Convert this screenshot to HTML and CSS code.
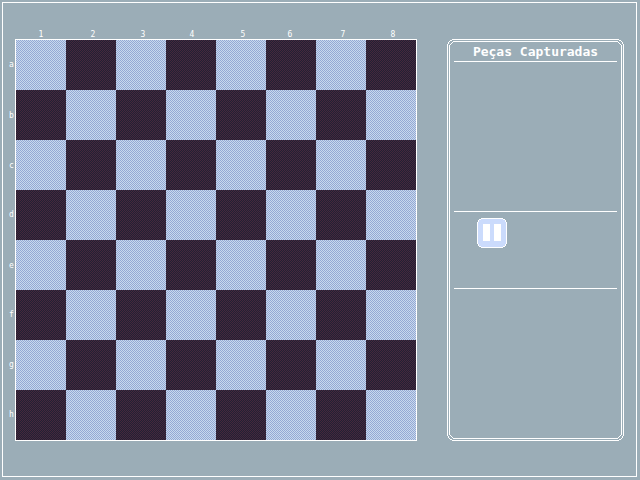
FILE: index.html
```
<!DOCTYPE html>
<html lang="pt">
<head>
<meta charset="utf-8">
<title>Xadrez</title>
<link rel="stylesheet" href="styles.css">
</head>
<body>
<main class="frame">
  <section class="game">
    <div class="columns"><span>1</span><span>2</span><span>3</span><span>4</span><span>5</span><span>6</span><span>7</span><span>8</span></div>
    <div class="rows"><span>a</span><span class="low">b</span><span class="low">c</span><span>d</span><span class="low">e</span><span>f</span><span>g</span><span>h</span></div>
    <div class="board"></div>
  </section>
  <aside class="panel">
    <svg class="outline" width="177" height="402" viewBox="0 0 177 402" shape-rendering="crispEdges" fill="none" stroke="#fff">
      <path d="M5 .5H172M5 401.5H172M.5 5V397M176.5 5V397M6 2.5H171M6 399.5H171M2.5 6V396M174.5 6V396"/>
      <g id="corner"><path d="M3 1.5H5M2 2.5H3M1.5 3V5M5 3.5H6M4 4.5H5M3.5 5V6"/></g>
      <use href="#corner" transform="translate(177 0) scale(-1 1)"/>
      <use href="#corner" transform="translate(0 402) scale(1 -1)"/>
      <use href="#corner" transform="translate(177 402) scale(-1 -1)"/>
    </svg>
    <h1 class="title">Peças Capturadas</h1>
    <div class="captured"></div>
    <div class="controls">
      <button class="pause" aria-label="Pausar">
        <svg width="30" height="30" viewBox="0 0 30 30" shape-rendering="crispEdges">
          <path fill="#fff" d="M4 0H26V1H28V2H29V4H30V26H29V28H28V29H26V30H4V29H2V28H1V26H0V4H1V2H2V1H4Z"/>
          <path fill="#cbdbfc" d="M4 1H26V2H28V4H29V26H28V28H26V29H4V28H2V26H1V4H2V2H4Z"/>
          <path fill="#fff" d="M6 6H13V23H6ZM17 6H24V23H17Z"/>
        </svg>
      </button>
    </div>
    <div class="captured"></div>
  </aside>
</main>
</body>
</html>
```
FILE: styles.css
```
* { box-sizing: border-box; }
body {
  margin: 0;
  padding: 2px;
  width: 640px;
  height: 480px;
  overflow: hidden;
  background: #9badb7;
  color: #fff;
  font-family: "DejaVu Sans Mono", monospace;
}
.frame {
  display: flex;
  gap: 30px;
  width: 635px;
  height: 475px;
  padding: 26px 0 0 3px;
  border: 1px solid #fff;
}
.game {
  display: grid;
  grid-template: 10px 402px / 9px 402px;
}
.columns {
  grid-column: 2;
  display: grid;
  grid-template-columns: repeat(8, 50px);
  padding-left: 1px;
  font-size: 8px;
  line-height: 12px;
  text-align: center;
}
.columns span:not(:first-child) { padding-left: 4px; }
.columns span:nth-child(4) { padding-left: 2px; }
.columns span:nth-child(6) { padding: 0 2px 0 0; }
.rows {
  display: grid;
  grid-template-rows: repeat(8, 50px);
  padding-top: 1px;
  font-size: 8px;
  line-height: 50px;
}
.rows span { padding-left: 3px; }
.rows .low { line-height: 52px; }
.board {
  position: relative;
  border: 1px solid #fff;
  background: conic-gradient(#c8d9ed 25%, #94a8d5 0 50%, #c8d9ed 0 75%, #94a8d5 0) 0 0 / 2px 2px;
}
.board::after {
  content: "";
  position: absolute;
  inset: 0;
  background: conic-gradient(#222034 25%, #45283c 0 50%, #222034 0 75%, #45283c 0) 0 0 / 2px 2px;
  mask: conic-gradient(#000 25%, #0000 0 50%, #000 0 75%, #0000 0) 0 0 / 100px 100px;
}
.panel {
  position: relative;
  width: 177px;
  height: 402px;
  margin-top: 10px;
  padding: 5px 7px;
}
.outline { position: absolute; left: 0; top: 0; }
.title {
  height: 18px;
  margin: 0;
  border-bottom: 1px solid #fff;
  font-size: 13px;
  font-weight: bold;
  line-height: 15px;
  text-align: center;
  white-space: nowrap;
}
.captured { height: 149px; }
.controls {
  height: 78px;
  padding: 6px 0 0 23px;
  border: solid #fff;
  border-width: 1px 0;
}
.pause { display: block; width: 30px; height: 30px; padding: 0; border: 0; background: none; }
.pause svg { display: block; }
```
